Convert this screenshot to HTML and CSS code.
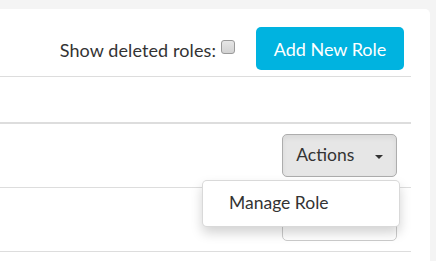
FILE: index.html
```html
<!DOCTYPE html>
<html lang="en">
<head>
  <meta charset="UTF-8">
  <title>Roles</title>
  <link rel="stylesheet" href="styles.css">
</head>
<body>
  <div class="card">
    <div class="toolbar">
      <label class="deleted-toggle">Show deleted roles: <input type="checkbox"></label>
      <button class="btn btn-primary">Add New Role</button>
    </div>

    <table class="roles">
      <thead>
        <tr><th></th><th></th></tr>
      </thead>
      <tbody>
        <tr>
          <td></td>
          <td class="actions-cell">
            <div class="btn-group open">
              <button class="btn btn-default active">Actions <span class="caret"></span></button>
              <ul class="dropdown-menu">
                <li><a href="#">Manage Role</a></li>
              </ul>
            </div>
          </td>
        </tr>
        <tr>
          <td></td>
          <td class="actions-cell">
            <div class="btn-group">
              <button class="btn btn-default">Actions <span class="caret"></span></button>
            </div>
          </td>
        </tr>
      </tbody>
    </table>
  </div>
</body>
</html>
```

FILE: styles.css
```css
html, body {
  margin: 0;
  padding: 0;
  overflow: hidden;
}

body {
  font-family: Lato, "Open Sans", Arial, sans-serif;
  color: #333;
  background-color: #f4f4f4;
  padding: 9px 6px 0 0;
  height: 261px;
  box-sizing: border-box;
}

.card {
  background-color: #fff;
  border-top-right-radius: 5px;
  padding: 0 19px 10px 0;
}

.toolbar {
  display: flex;
  justify-content: flex-end;
  align-items: center;
  gap: 21px;
  padding: 18px 7px 6px 0;
  border-bottom: 1px solid #ddd;
}

.deleted-toggle {
  display: flex;
  align-items: center;
  gap: 5px;
  font-size: 18px;
  letter-spacing: 0.1px;
  padding-top: 2px;
}

.deleted-toggle input {
  appearance: none;
  -webkit-appearance: none;
  width: 14px;
  height: 14px;
  margin: 0 0 6px 0;
  border: 1px solid #9a9a9a;
  border-radius: 3px;
  background: linear-gradient(#e6e6e6, #d2d2d2);
  box-sizing: border-box;
}

.btn {
  font-family: inherit;
  font-size: 18px;
  height: 43px;
  border-radius: 5px;
  cursor: pointer;
}

.btn-primary {
  background-color: #00b3e0;
  color: #fff;
  border: none;
  padding: 0 16px;
  width: 148px;
}

.roles {
  width: 100%;
  border-collapse: collapse;
}

.roles th {
  height: 45px;
  border-bottom: 2px solid #ddd;
  padding: 0;
}

.roles td {
  height: 63px;
  border-bottom: 1px solid #ddd;
  padding: 0;
}

.actions-cell {
  text-align: right;
  padding-right: 14px !important;
  width: 130px;
}

.btn-group {
  position: relative;
  display: inline-block;
  vertical-align: middle;
}

.btn-default {
  width: 115px;
  font-size: 17.5px;
  background-color: #fff;
  color: #333;
  border: 1px solid #ccc;
  padding: 0 0 2px 0;
}

.btn-default.active {
  background-color: #e6e6e6;
  border-color: #adadad;
  box-shadow: inset 0 3px 5px rgba(0, 0, 0, 0.06);
}

.caret {
  display: inline-block;
  width: 0;
  height: 0;
  margin-left: 16px;
  vertical-align: middle;
  border-top: 4px solid #333;
  border-left: 4px solid transparent;
  border-right: 4px solid transparent;
}

.dropdown-menu {
  display: none;
  position: absolute;
  top: 100%;
  right: -3px;
  z-index: 10;
  margin: 3px 0 0;
  padding: 5px 0;
  width: 198px;
  box-sizing: border-box;
  list-style: none;
  text-align: left;
  background-color: #fff;
  border: 1px solid rgba(0, 0, 0, 0.15);
  border-radius: 5px;
  box-shadow: 0 6px 12px rgba(0, 0, 0, 0.175);
}

.open .dropdown-menu {
  display: block;
}

.dropdown-menu a {
  display: block;
  padding: 6px 26px 8px;
  font-size: 17.5px;
  color: #333;
  text-decoration: none;
}
```
